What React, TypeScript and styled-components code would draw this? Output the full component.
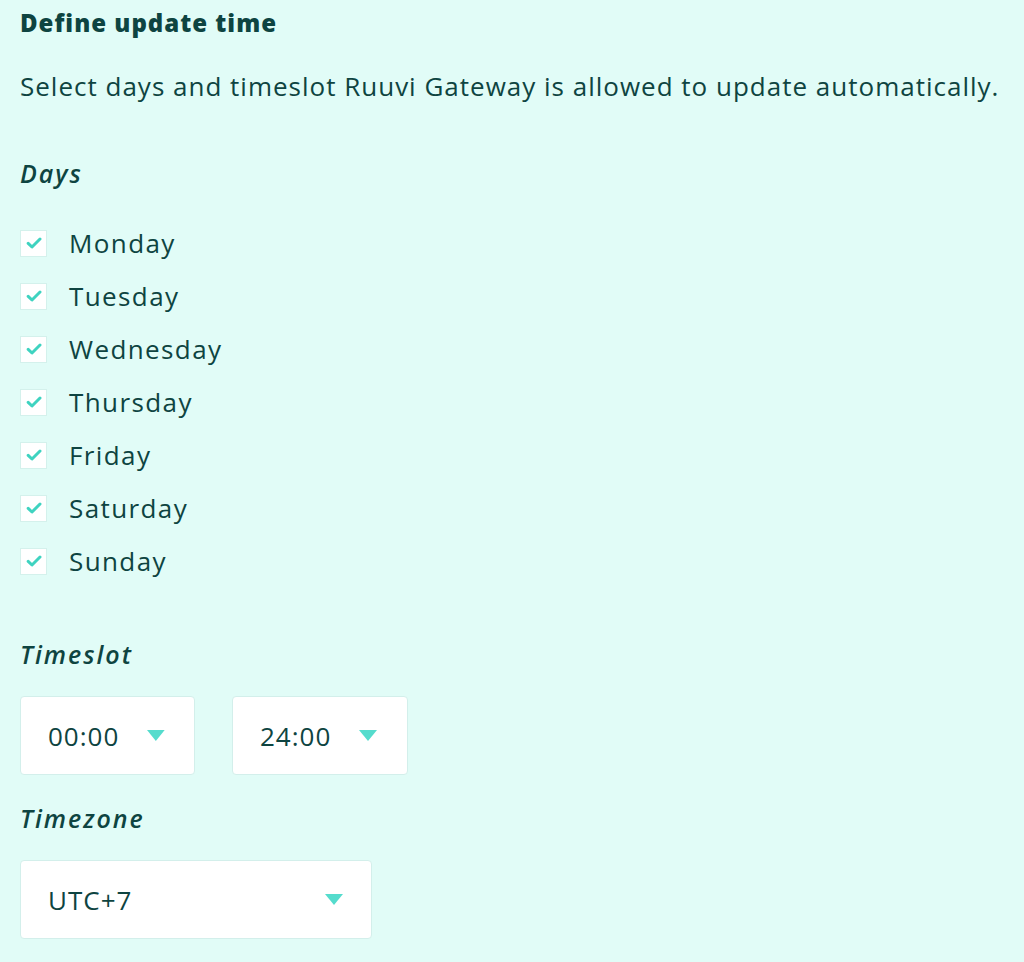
import styled, { createGlobalStyle } from "styled-components";

const days = ["Monday", "Tuesday", "Wednesday", "Thursday", "Friday", "Saturday", "Sunday"];

const GlobalStyle = createGlobalStyle`
  html, body {
    margin: 0;
    padding: 0;
    background: #e1fcf7;
  }
  body {
    font-family: "Open Sans", "Noto Sans", sans-serif;
    color: #0e4441;
  }
`;

const Check = () => (
    <svg width="16" height="12" viewBox="0 0 16 12">
        <path d="M2.2 6.4 L6 10 L14 2" fill="none" stroke="#3fd3c0" strokeWidth="3" strokeLinecap="round" strokeLinejoin="round" />
    </svg>
);

const Caret = () => (
    <svg width="18" height="11" viewBox="0 0 18 11">
        <path d="M0 0 H18 L9 11 Z" fill="#55dccd" />
    </svg>
);

export default function App() {
    return (
        <>
            <GlobalStyle />
            <Wrapper>
                <Title>Define update time</Title>
                <Paragraph>Select days and timeslot Ruuvi Gateway is allowed to update automatically.</Paragraph>
                <Label>Days</Label>
                <DayList>
                    {days.map((d) => (
                        <DayRow key={d}>
                            <Box><Check /></Box>
                            <DayName>{d}</DayName>
                        </DayRow>
                    ))}
                </DayList>
                <Label $top={62}>Timeslot</Label>
                <SelectRow>
                    <Select $width={175}>
                        <span>00:00</span>
                        <Caret />
                    </Select>
                    <Select $width={176}>
                        <span>24:00</span>
                        <Caret />
                    </Select>
                </SelectRow>
                <Label $top={26}>Timezone</Label>
                <SelectRow>
                    <Select $width={352} $spread>
                        <span>UTC+7</span>
                        <Caret />
                    </Select>
                </SelectRow>
            </Wrapper>
        </>
    );
}

const Wrapper = styled.div`
    padding: 6px 20px 0;
    display: flex;
    flex-direction: column;
    height: 956px;
`;

const Title = styled.h1`
    margin: 0;
    font-size: 24px;
    font-weight: 800;
    line-height: 34px;
    letter-spacing: 1px;
`;

const Paragraph = styled.p`
    margin: 29px 0 0;
    font-size: 26px;
    line-height: 34px;
    letter-spacing: 1px;
    white-space: nowrap;
`;

const Label = styled.div<{ $top?: number }>`
    margin-top: ${(p) => p.$top ?? 53}px;
    font-size: 25px;
    font-style: italic;
    font-weight: 600;
    line-height: 34px;
    letter-spacing: 2px;
`;

const DayList = styled.div`
    margin-top: 39px;
    display: flex;
    flex-direction: column;
    gap: 25px;
`;

const DayRow = styled.label`
    display: flex;
    align-items: center;
    gap: 22px;
    height: 28px;
`;

const Box = styled.span`
    width: 27px;
    height: 27px;
    box-sizing: border-box;
    background: #ffffff;
    border: 1px solid #d4f1ec;
    display: flex;
    align-items: center;
    justify-content: center;
`;

const DayName = styled.span`
    font-size: 26px;
    letter-spacing: 1.4px;
`;

const SelectRow = styled.div`
    margin-top: 25px;
    display: flex;
    gap: 37px;
`;

const Select = styled.div<{ $width: number; $spread?: boolean }>`
    width: ${(p) => p.$width}px;
    height: 79px;
    box-sizing: border-box;
    background: #ffffff;
    border: 1px solid #d3efeb;
    border-radius: 4px;
    padding: 0 ${(p) => (p.$spread ? 28 : 29)}px 0 27px;
    display: flex;
    align-items: center;
    justify-content: ${(p) => (p.$spread ? "space-between" : "flex-start")};
    gap: 28px;
    font-size: 26px;
    letter-spacing: 1px;
`;
